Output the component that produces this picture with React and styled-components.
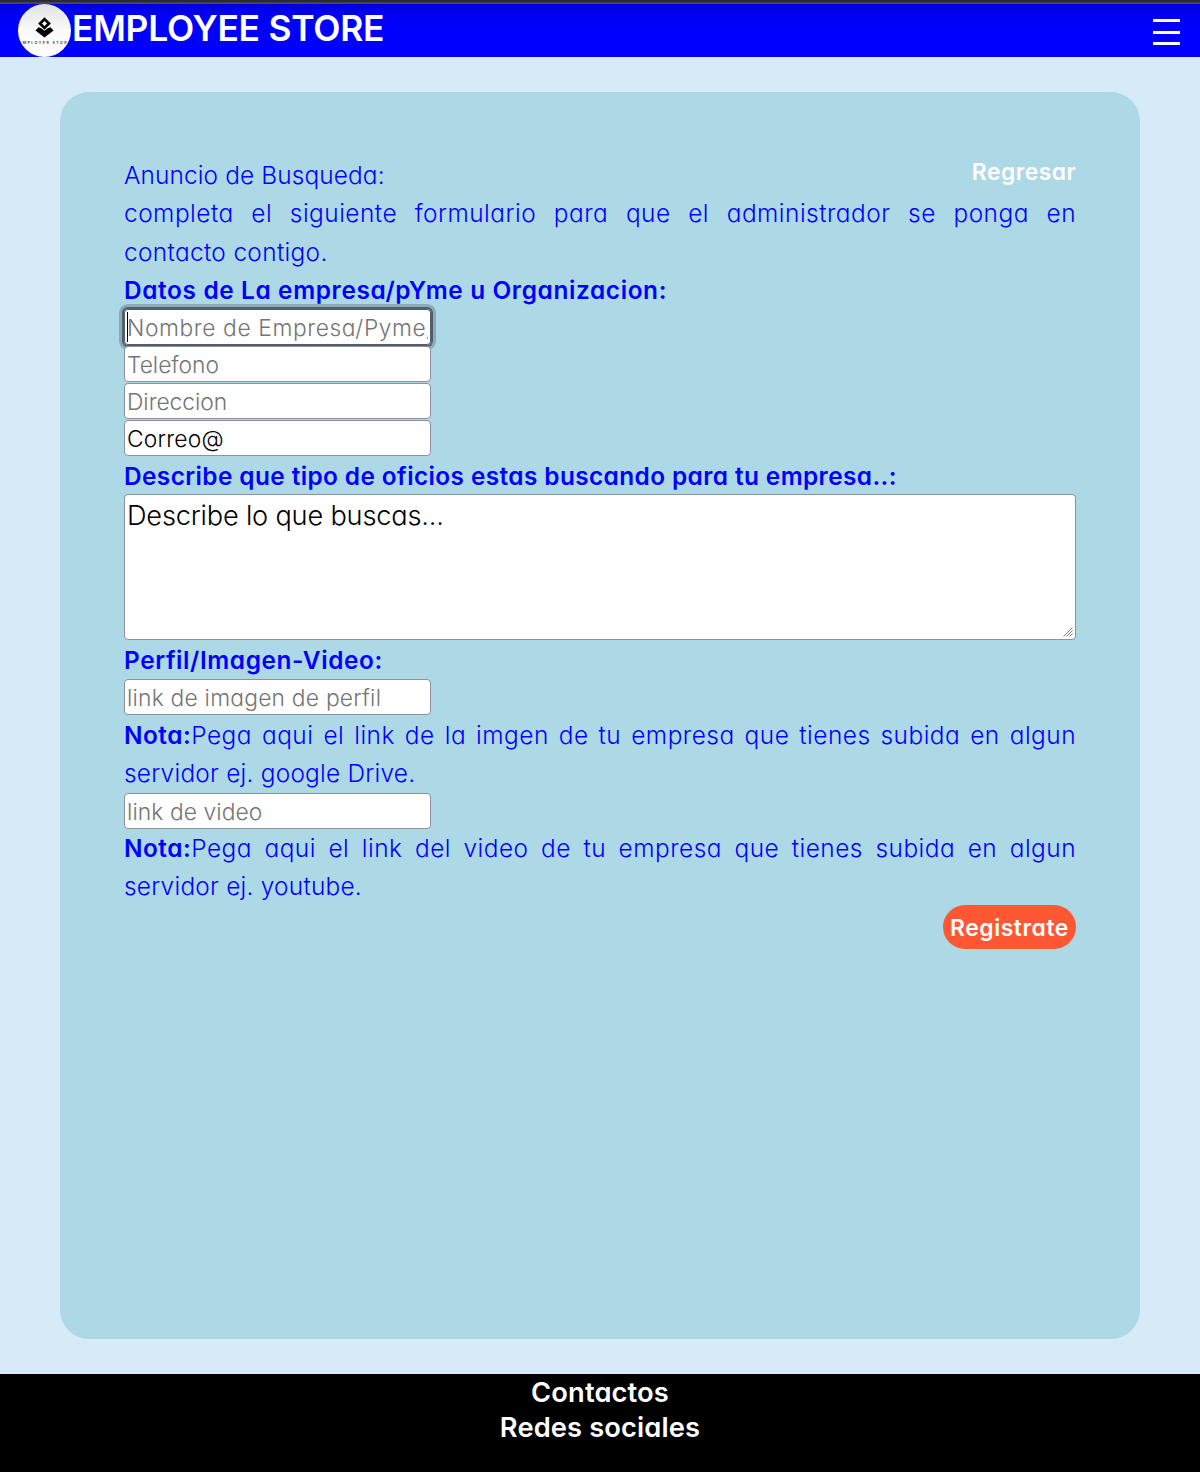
import React from 'react';
import styled, { createGlobalStyle, css } from 'styled-components';

const Global = createGlobalStyle`
  *, *::before, *::after { box-sizing: border-box; }
  body {
    margin: 0;
    background: #d7eaf8;
    font-family: Inter, "Open Sans", sans-serif;
    font-feature-settings: "cv11";
    font-weight: 320;
  }
`;

const Page = styled.div`
  display: flex;
  flex-direction: column;
  min-height: 1472px;
`;

const Header = styled.header`
  display: flex;
  align-items: flex-start;
  height: 57px;
  padding: 4px 19px 0 18px;
  background: linear-gradient(
    #2b2a33 2px,
    #46464d 2px,
    #46464d 4px,
    #0000dc 4px,
    #0000f2 14px,
    #0000ff 28px
  );
`;

const Logo = styled.svg`
  width: 53px;
  height: 53px;
  flex: none;
`;

const Brand = styled.h1`
  flex: 1;
  margin: 0 0 0 1px;
  font-size: 35.4px;
  font-weight: 600;
  line-height: 49px;
  letter-spacing: -0.25px;
  color: #fff;
`;

const MenuButton = styled.button`
  display: flex;
  flex-direction: column;
  justify-content: space-between;
  width: 29px;
  height: 26px;
  margin-top: 15px;
  padding: 0 1px;
  border: 0;
  background: none;
`;

const Bar = styled.span`
  height: 3px;
  background: #fff;
`;

const Main = styled.main`
  flex: 1;
  display: flex;
  padding: 35px 60px;
`;

const Card = styled.section`
  flex: 1;
  padding: 64px;
  border-radius: 29px;
  background: #add8e6;
  color: #0000ff;
`;

const Line = styled.p`
  margin: 0;
  font-size: 24.4px;
  line-height: 38.4px;
  height: 38.4px;
  white-space: nowrap;
  letter-spacing: ${(p) => p.$track ?? 0.25}px;
  ${(p) =>
    p.$justify &&
    css`
      white-space: normal;
      text-align: justify;
      text-align-last: justify;
    `}
`;

const TopRow = styled.div`
  display: flex;
  justify-content: space-between;
`;

const Strong = styled.strong`
  font-weight: 600;
`;

const Back = styled.a`
  font-size: 22.8px;
  font-weight: 600;
  line-height: 32px;
  letter-spacing: 0.5px;
  color: #fff;
`;

const Label = styled.h2`
  margin: 0 0 -0.6px;
  font-size: 24.4px;
  font-weight: 600;
  line-height: 38.4px;
  white-space: nowrap;
  letter-spacing: ${(p) => p.$track}px;
`;

const Field = styled.div`
  position: relative;
  width: 307px;
  height: 36px;
  margin-bottom: ${(p) => p.$gap ?? 1}px;
  border-radius: 4px;
  ${(p) =>
    p.$focused &&
    css`
      box-shadow: 0 0 0 2px #525e6b, 0 0 0 5px #88acb9;
      &::after {
        content: "";
        position: absolute;
        left: 3px;
        top: 3px;
        width: 1px;
        height: 30px;
        background: #000;
      }
    `}
`;

const Input = styled.input`
  display: block;
  width: 100%;
  height: 100%;
  padding: 2px 2px 0;
  border: 1px solid ${(p) => (p.$focused ? '#525e6b' : '#8f8f9d')};
  border-radius: 4px;
  background: #fff;
  outline: none;
  font: inherit;
  font-feature-settings: inherit;
  font-size: 22.8px;
  letter-spacing: ${(p) => p.$track}px;
  color: #000;
  &::placeholder {
    color: #757575;
    opacity: 1;
  }
`;

const AreaWrap = styled.div`
  position: relative;
  height: 146px;
  margin: -1.25px 0 1px;
`;

const Area = styled.textarea`
  display: block;
  width: 100%;
  height: 100%;
  padding: 3px 2px;
  border: 1px solid #8f8f9d;
  border-radius: 4px;
  background: #fff;
  resize: none;
  outline: none;
  font: inherit;
  font-feature-settings: inherit;
  font-size: 27.2px;
  line-height: 36px;
  letter-spacing: -0.2px;
  color: #000;
`;

const Grip = styled.svg`
  position: absolute;
  right: 3px;
  bottom: 3px;
  width: 10px;
  height: 10px;
`;

const Actions = styled.div`
  display: flex;
  justify-content: flex-end;
  margin-top: -0.6px;
`;

const Submit = styled.button`
  width: 133px;
  height: 44px;
  padding: 1px 0 0;
  border: 0;
  border-radius: 22px;
  background: #ff5733;
  font: inherit;
  font-feature-settings: inherit;
  font-size: 22.8px;
  font-weight: 600;
  letter-spacing: 0.6px;
  color: #fff;
`;

const Footer = styled.footer`
  height: 98px;
  padding-top: 1px;
  background: #000;
  text-align: center;
`;

const FooterLink = styled.p`
  margin: 0;
  font-size: 27.3px;
  font-weight: 600;
  line-height: 35px;
  letter-spacing: 0.12px;
  color: #fff;
`;

const LogoText = styled.text`
  font-family: Inter, sans-serif;
  font-size: 3.5px;
  font-weight: 600;
  fill: #333;
`;

function TextField({ focused, gap, track = 0.25, ...rest }) {
  return (
    <Field $focused={focused} $gap={gap}>
      <Input $focused={focused} $track={track} {...rest} />
    </Field>
  );
}

export default function App() {
  return (
    <Page>
      <Global />
      <Header>
        <Logo viewBox="0 0 53 53">
          <defs>
            <linearGradient id="disc" x1="0" y1="0" x2="0" y2="1">
              <stop offset="0" stopColor="#e2e2e2" />
              <stop offset="0.5" stopColor="#fafafa" />
              <stop offset="1" stopColor="#fff" />
            </linearGradient>
            <clipPath id="round"><circle cx="26.5" cy="26.5" r="26.5" /></clipPath>
          </defs>
          <circle cx="26.5" cy="26.5" r="26.5" fill="url(#disc)" />
          <path fillRule="evenodd" d="M26.5 13.2l6.4 6.2-6.4 6.4-6.4-6.4zM26.5 16.9l-2.6 2.6 2.6 2.6 2.6-2.6z" fill="#000" />
          <path d="M17.4 26.6l3.2-3.4q2.4.3 5.9 3.5 3.5-3.2 5.9-3.5l3.2 3.4-9.1 6.9z" fill="#000" />
          <g clipPath="url(#round)">
            <LogoText x="1.2" y="39.8" textLength="51">EMPLOYER STORE</LogoText>
          </g>
        </Logo>
        <Brand>EMPLOYEE STORE</Brand>
        <MenuButton aria-label="Menu">
          <Bar />
          <Bar />
          <Bar />
        </MenuButton>
      </Header>

      <Main>
        <Card>
          <TopRow>
            <Line $track={0.13}>Anuncio de Busqueda:</Line>
            <Back>Regresar</Back>
          </TopRow>
          <Line $justify $track={0.5}>completa el siguiente formulario para que el administrador se ponga en</Line>
          <Line $track={0.35}>contacto contigo.</Line>

          <Label $track={0.63}>Datos de La empresa/pYme u Organizacion:</Label>
          <TextField focused placeholder="Nombre de Empresa/Pyme/Organizacion" track={0.6} />
          <TextField placeholder="Telefono" track={-0.03} />
          <TextField placeholder="Direccion" track={-0.03} />
          <TextField defaultValue="Correo@" />

          <Label $track={0.4}>Describe que tipo de oficios estas buscando para tu empresa..:</Label>
          <AreaWrap>
            <Area defaultValue="Describe lo que buscas..." />
            <Grip viewBox="0 0 10 10" stroke="#777" strokeWidth="1" fill="none">
              <path d="M.5 9.5l9-9M3.5 9.5l6-6M6.5 9.5l3-3" />
            </Grip>
          </AreaWrap>

          <Label $track={0.6}>Perfil/Imagen-Video:</Label>
          <TextField placeholder="link de imagen de perfil" track={0.22} />
          <Line $justify $track={0.5}>
            <Strong>Nota:</Strong>Pega aqui el link de la imgen de tu empresa que tienes subida en algun
          </Line>
          <Line $track={0.25}>servidor ej. google Drive.</Line>
          <TextField placeholder="link de video" track={0.08} gap={0} />
          <Line $justify $track={0.5}>
            <Strong>Nota:</Strong>Pega aqui el link del video de tu empresa que tienes subida en algun
          </Line>
          <Line $track={0.25}>servidor ej. youtube.</Line>
          <Actions>
            <Submit>Registrate</Submit>
          </Actions>
        </Card>
      </Main>

      <Footer>
        <FooterLink>Contactos</FooterLink>
        <FooterLink>Redes sociales</FooterLink>
      </Footer>
    </Page>
  );
}
